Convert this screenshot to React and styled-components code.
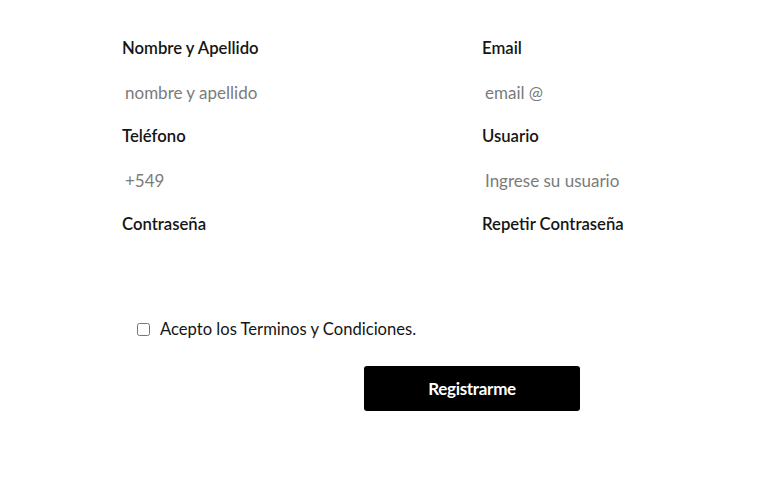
import React, { useState } from "react";
import styled, { createGlobalStyle } from "styled-components";

const GlobalStyle = createGlobalStyle`
  html, body {
    margin: 0;
    overflow-x: hidden;
    background: #fff;
    font-family: Lato, "Open Sans", sans-serif;
  }
`;

const fields = [
  { label: "Nombre y Apellido", placeholder: "nombre y apellido", type: "text" },
  { label: "Email", placeholder: "email @", type: "email" },
  { label: "Teléfono", placeholder: "+549", type: "tel" },
  { label: "Usuario", placeholder: "Ingrese su usuario", type: "text" },
  { label: "Contraseña", placeholder: "", type: "password" },
  { label: "Repetir Contraseña", placeholder: "", type: "password" },
];

const App = () => {
  const [accepted, setAccepted] = useState(false);

  return (
    <>
      <GlobalStyle />
      <Form onSubmit={(e) => e.preventDefault()}>
        <Grid>
          {fields.map((f) => (
            <Field key={f.label}>
              <Label>{f.label}</Label>
              <Input type={f.type} placeholder={f.placeholder} />
            </Field>
          ))}
        </Grid>
        <Terms>
          <Checkbox
            type="checkbox"
            checked={accepted}
            onChange={() => setAccepted(!accepted)}
          />
          <span>Acepto los Terminos y Condiciones.</span>
        </Terms>
        <ButtonRow>
          <Button type="submit">Registrarme</Button>
        </ButtonRow>
      </Form>
    </>
  );
};

const Form = styled.form`
  width: 700px;
  padding: 36px 0 0 122px;
`;

const Grid = styled.div`
  display: grid;
  grid-template-columns: 360px 340px;
  row-gap: 10px;
`;

const Field = styled.div`
  display: flex;
  flex-direction: column;
`;

const Label = styled.label`
  font-size: 16.7px;
  line-height: 24px;
  font-weight: 600;
  color: #151515;
  margin-bottom: 10px;
`;

const Input = styled.input`
  height: 44px;
  box-sizing: border-box;
  border: none;
  outline: none;
  padding: 0 3px;
  font-family: Lato, "Open Sans", sans-serif;
  font-size: 17px;
  color: #333;
  background: transparent;
  width: 240px;

  &::placeholder {
    color: #7b7b7b;
  }
`;

const Terms = styled.label`
  display: flex;
  align-items: center;
  gap: 10px;
  margin: 28px 0 0 15px;
  font-size: 16.6px;
  line-height: 22px;
  color: #151515;
`;

const Checkbox = styled.input`
  width: 13px;
  height: 13px;
  margin: 0;
`;

const ButtonRow = styled.div`
  display: flex;
  justify-content: center;
  margin-top: 26px;
`;

const Button = styled.button`
  width: 216px;
  height: 45px;
  background: #000;
  color: #fff;
  border: none;
  border-radius: 3px;
  font-family: Lato, "Open Sans", sans-serif;
  font-size: 17px;
  font-weight: 700;
  letter-spacing: -0.3px;
  cursor: pointer;
`;

export default App;
